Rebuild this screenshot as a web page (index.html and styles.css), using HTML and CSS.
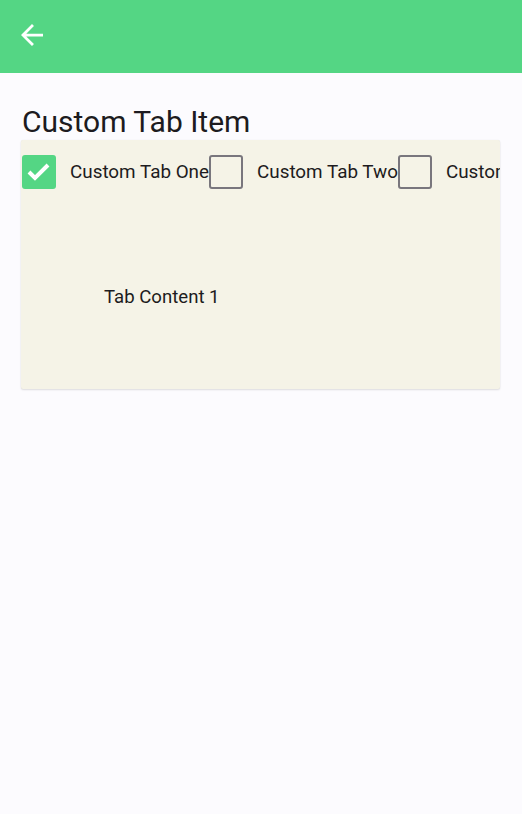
FILE: index.html
```html
<!DOCTYPE html>
<html>
<head>
<meta charset="utf-8">
<link rel="stylesheet" href="styles.css">
</head>
<body>
<header class="appbar">
  <svg class="back" viewBox="4 4 16 16" width="22" height="22"><path fill="#fff" d="M20 11H7.83l5.59-5.59L12 4l-8 8 8 8 1.41-1.41L7.83 13H20v-2z"/></svg>
</header>
<main class="page">
  <h1 class="title">Custom Tab Item</h1>
  <section class="card">
    <div class="tabs">
      <div class="tab">
        <span class="box checked"><svg viewBox="0 0 34 34" width="34" height="34"><path d="M7 17l6 6 13-13" fill="none" stroke="#fff" stroke-width="4"/></svg></span>
        <span class="label">Custom Tab One</span>
      </div>
      <div class="tab">
        <span class="box"></span>
        <span class="label">Custom Tab Two</span>
      </div>
      <div class="tab">
        <span class="box"></span>
        <span class="label">Custom Tab Three</span>
      </div>
    </div>
    <div class="content">Tab Content 1</div>
  </section>
</main>
</body>
</html>
```
FILE: styles.css
```css
html, body { margin: 0; padding: 0; }
body {
  background: #fcfbfe;
  font-family: Roboto, "Liberation Sans", sans-serif;
  color: #1d1b20;
  width: 522px;
  height: 814px;
  overflow: hidden;
}
.appbar {
  height: 73px;
  background: #54d684;
  display: flex;
  align-items: center;
  padding-left: 21px;
  box-sizing: border-box;
}
.back { display: block; margin-top: -3px; }
.page { padding: 0 22px 0 21px; }
.title {
  margin: 0;
  padding: 31px 0 0 1px;
  font-size: 30px;
  font-weight: 400;
  line-height: 36px;
  height: 36px;
}
.card {
  background: #f5f3e7;
  height: 249px;
  box-sizing: border-box;
  box-shadow: 0 1px 2px rgba(0,0,0,0.12), 0 0 1px rgba(0,0,0,0.08);
  border-radius: 2px;
  overflow: hidden;
}
.tabs {
  display: flex;
  padding: 15px 0 0 1px;
  white-space: nowrap;
}
.tab {
  display: flex;
  align-items: center;
  flex: none;
}
.box {
  width: 34px;
  height: 34px;
  box-sizing: border-box;
  border: 2.5px solid #79767d;
  border-radius: 3px;
  margin-right: 14px;
  flex: none;
}
.box.checked {
  background: #54d684;
  border: none;
}
.box svg { display: block; }
.label {
  font-size: 18.85px;
  line-height: 34px;
  color: #1d1b20;
}
.content {
  padding: 96px 0 0 83px;
  font-size: 18.6px;
  line-height: 24px;
}
```
